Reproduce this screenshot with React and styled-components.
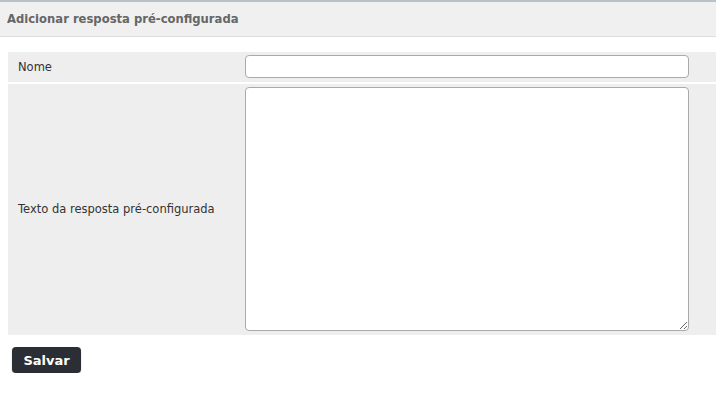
import React from "react";
import styled, { createGlobalStyle } from "styled-components";

const GlobalStyle = createGlobalStyle`
  body {
    margin: 0;
    background: #ffffff;
    font-family: "DejaVu Sans", Verdana, sans-serif;
    font-size: 11.5px;
    color: #333333;
  }
`;

const Header = styled.div`
  border-top: 2px solid #b9c1ca;
  border-bottom: 1px solid #dddddd;
  background: #f0f0f0;
  height: 34px;
  display: flex;
  align-items: center;
  padding-left: 7px;
`;

const Title = styled.h2`
  margin: 0;
  font-size: 11.6px;
  font-weight: 700;
  color: #666666;
`;

const Form = styled.form`
  padding: 15px 0 0 8px;
`;

const Table = styled.div`
  display: flex;
  flex-direction: column;
  gap: 2px;
`;

const Row = styled.div`
  display: flex;
  align-items: center;
  background: #eeeeee;
  padding: 3px 27px 4px 0;
`;

const Label = styled.label`
  width: 237px;
  flex-shrink: 0;
  padding-left: 10px;
  box-sizing: border-box;
  color: #333333;
`;

const Input = styled.input`
  flex: 1;
  height: 23px;
  box-sizing: border-box;
  border: 1px solid #aaaaaa;
  border-radius: 4px;
  background: #ffffff;
  font: inherit;
`;

const TextArea = styled.textarea`
  flex: 1;
  height: 244px;
  box-sizing: border-box;
  border: 1px solid #aaaaaa;
  border-radius: 4px;
  background: #ffffff;
  font: inherit;
  resize: both;
`;

const SaveButton = styled.button`
  margin: 12px 0 0 4px;
  width: 69px;
  height: 26px;
  background: #2b2f35;
  color: #ffffff;
  border: none;
  border-radius: 4px;
  font-family: "DejaVu Sans", Verdana, sans-serif;
  font-size: 13px;
  font-weight: 700;
  box-shadow: 0 1px 2px #00000033;
  cursor: pointer;
`;

export default function App() {
  return (
    <>
      <GlobalStyle />
      <Header>
        <Title>Adicionar resposta pré-configurada</Title>
      </Header>
      <Form onSubmit={(e) => e.preventDefault()}>
        <Table>
          <Row>
            <Label htmlFor="nome">Nome</Label>
            <Input id="nome" type="text" />
          </Row>
          <Row>
            <Label htmlFor="texto">Texto da resposta pré-configurada</Label>
            <TextArea id="texto" />
          </Row>
        </Table>
        <SaveButton type="submit">Salvar</SaveButton>
      </Form>
    </>
  );
}
